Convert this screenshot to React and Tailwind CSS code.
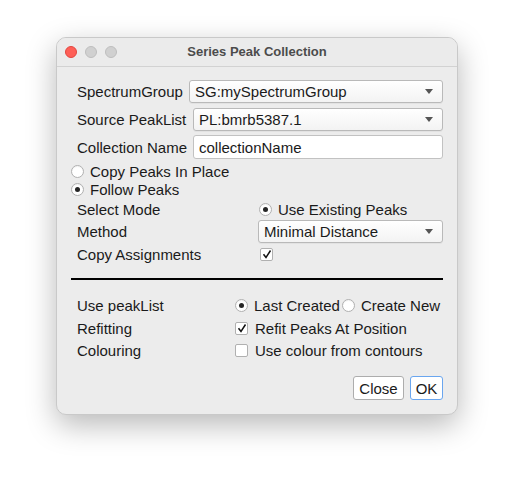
import React from "react";

function Radio({ checked }) {
  return (
    <span className="w-[13px] h-[13px] rounded-full border border-[#b0b0b0] bg-white flex items-center justify-center shrink-0 shadow-[inset_0_1px_1px_rgba(0,0,0,0.05)]">
      {checked && <span className="w-[5px] h-[5px] rounded-full bg-[#262626]" />}
    </span>
  );
}

function Check({ checked }) {
  return (
    <span className="w-[13px] h-[13px] rounded-[2px] border border-[#b0b0b0] bg-white flex items-center justify-center shrink-0">
      {checked && (
        <svg width="10" height="10" viewBox="0 0 10 10">
          <path d="M1.5 5.2 L4 8.5 L8.5 1.5" fill="none" stroke="#111" strokeWidth="1.5" />
        </svg>
      )}
    </span>
  );
}

function Combo({ value, className = "" }) {
  return (
    <div
      className={`h-[23px] flex items-center justify-between pl-[5px] pr-[9px] border border-[#b9b9b9] rounded-[3px] bg-gradient-to-b from-white to-[#f3f3f3] shadow-[0_1px_0_rgba(0,0,0,0.04)] ${className}`}
    >
      <span>{value}</span>
      <svg width="8" height="5" viewBox="0 0 8 5">
        <path d="M0 0 L8 0 L4 5 Z" fill="#555" />
      </svg>
    </div>
  );
}

export default function App() {
  return (
    <div className="w-[514px] h-[490px] bg-white relative" style={{ fontFamily: '"Liberation Sans", Arial, sans-serif' }}>
      <div className="absolute left-[56px] top-[37px] w-[402px] h-[378px] rounded-[10px] bg-[#ececec] border border-[#c9c9c9] shadow-[0_10px_30px_rgba(0,0,0,0.28)] overflow-hidden flex flex-col">
        {/* title bar */}
        <div className="h-[29px] shrink-0 flex items-center relative border-b border-[#d2d2d2] bg-[#ebebeb]">
          <div className="flex gap-[8px] pl-[8px]">
            <span className="w-[12px] h-[12px] rounded-full bg-[#fe5f57] border border-[#e2463f]" />
            <span className="w-[12px] h-[12px] rounded-full bg-[#d0d0d0] border border-[#bdbdbd]" />
            <span className="w-[12px] h-[12px] rounded-full bg-[#d0d0d0] border border-[#bdbdbd]" />
          </div>
          <div className="absolute inset-0 flex items-center justify-center text-[13px] font-bold text-[#4c4c4c]">
            Series Peak Collection
          </div>
        </div>

        {/* body */}
        <div className="flex flex-col pl-[14px] pr-[14px] pt-[13px] text-[15px] text-[#1a1a1a] leading-none">
          <div className="flex items-center h-[23px] pl-[6px]">
            <span className="w-[112px] shrink-0">SpectrumGroup</span>
            <Combo value="SG:mySpectrumGroup" className="flex-1" />
          </div>
          <div className="flex items-center h-[23px] mt-[5px] pl-[6px]">
            <span className="w-[116px] shrink-0">Source PeakList</span>
            <Combo value="PL:bmrb5387.1" className="flex-1" />
          </div>
          <div className="flex items-center h-[24px] mt-[4px] pl-[6px]">
            <span className="w-[116px] shrink-0">Collection Name</span>
            <div className="flex-1 h-[24px] border border-[#c2c2c2] rounded-[3px] bg-white flex items-center pl-[5px]">
              collectionName
            </div>
          </div>

          <div className="flex items-center h-[18px] mt-[3px] gap-[6px]">
            <Radio />
            <span>Copy Peaks In Place</span>
          </div>
          <div className="flex items-center h-[18px] gap-[6px]">
            <Radio checked />
            <span>Follow Peaks</span>
          </div>

          <div className="flex items-center h-[20px] mt-[1px] pl-[6px]">
            <span className="w-[182px] shrink-0">Select Mode</span>
            <div className="flex items-center gap-[6px]">
              <Radio checked />
              <span>Use Existing Peaks</span>
            </div>
          </div>
          <div className="flex items-center h-[23px] mt-[1px] pl-[6px]">
            <span className="w-[181px] shrink-0">Method</span>
            <Combo value="Minimal Distance" className="flex-1" />
          </div>
          <div className="flex items-center h-[20px] mt-[1px] pl-[6px]">
            <span className="w-[183px] shrink-0">Copy Assignments</span>
            <Check checked />
          </div>

          <div className="h-[2px] bg-black mt-[14px]" />

          <div className="flex items-center h-[20px] mt-[15px] pl-[6px]">
            <span className="w-[158px] shrink-0">Use peakList</span>
            <div className="flex items-center gap-[6px]">
              <Radio checked />
              <span>Last Created</span>
            </div>
            <div className="flex items-center gap-[6px] ml-[2px]">
              <Radio />
              <span>Create New</span>
            </div>
          </div>
          <div className="flex items-center h-[20px] mt-[3px] pl-[6px]">
            <span className="w-[158px] shrink-0">Refitting</span>
            <div className="flex items-center gap-[7px]">
              <Check checked />
              <span>Refit Peaks At Position</span>
            </div>
          </div>
          <div className="flex items-center h-[20px] mt-[2px] pl-[6px]">
            <span className="w-[158px] shrink-0">Colouring</span>
            <div className="flex items-center gap-[7px]">
              <Check />
              <span>Use colour from contours</span>
            </div>
          </div>

          <div className="flex justify-end gap-[6px] mt-[16px]">
            <button className="h-[24px] w-[51px] bg-white border border-[#adadad] rounded-[3px] text-[15px] flex items-center justify-center">
              Close
            </button>
            <button className="h-[24px] w-[33px] bg-white border border-[#6aa6ef] rounded-[3px] text-[15px] flex items-center justify-center">
              OK
            </button>
          </div>
        </div>
      </div>
    </div>
  );
}
